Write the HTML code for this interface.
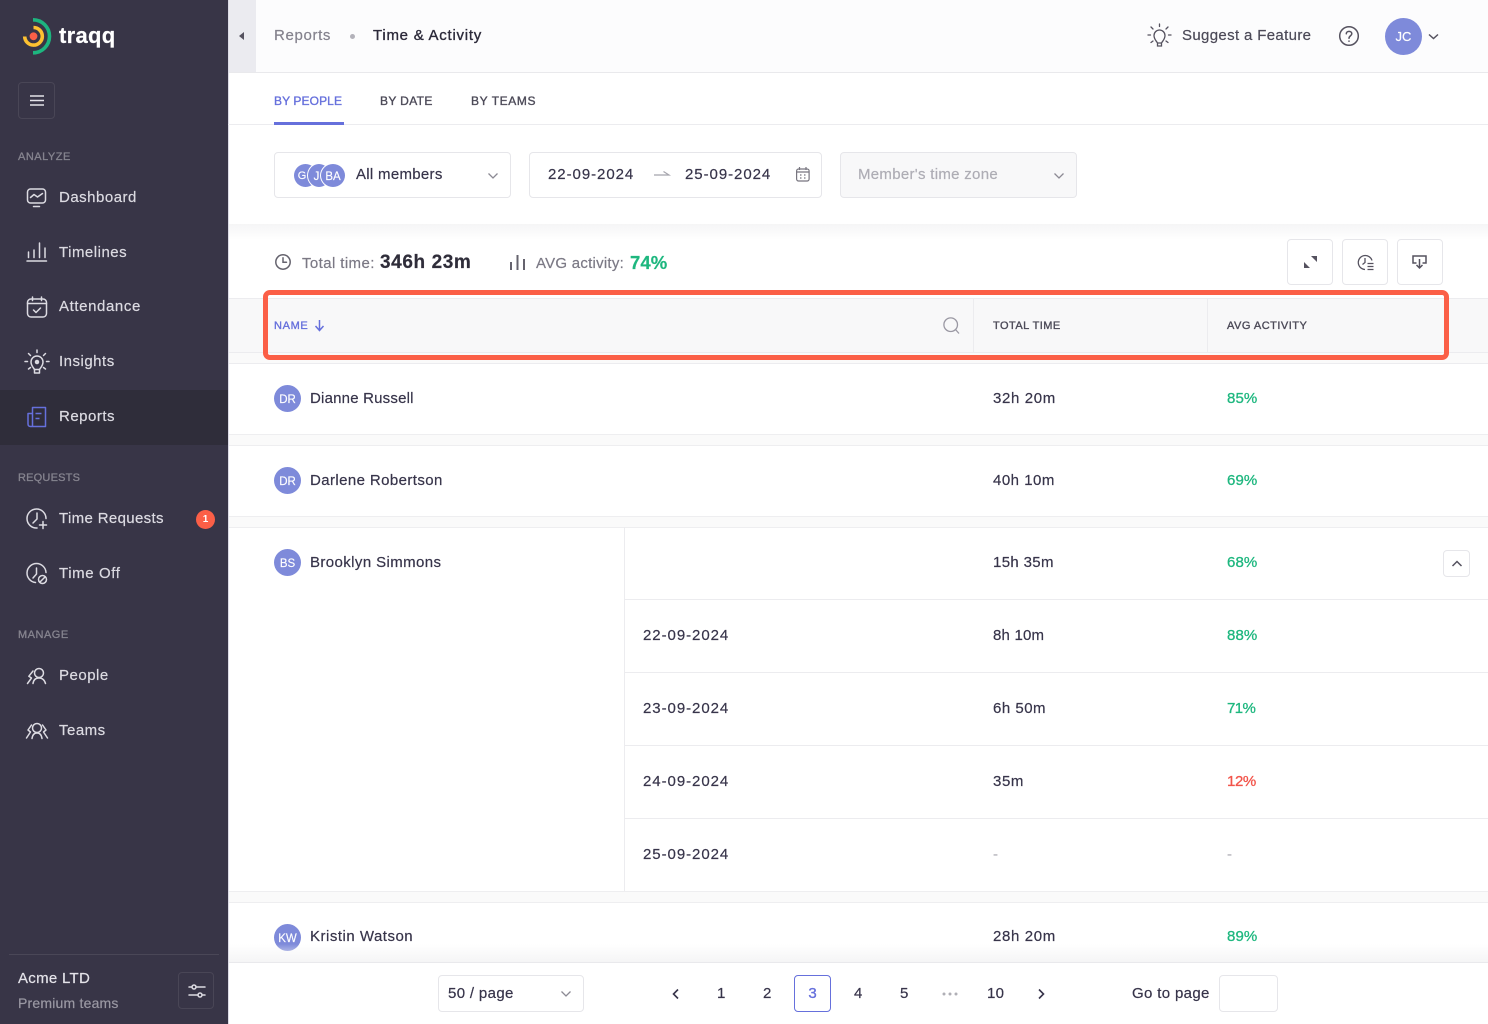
<!DOCTYPE html>
<html><head><meta charset="utf-8"><style>
*{box-sizing:border-box}
html,body{margin:0;padding:0}
body{width:1488px;height:1024px;position:relative;overflow:hidden;background:#fff;font-family:"Liberation Sans",sans-serif;color:#37344a;font-size:15px}
.a,.t{position:absolute}
.t{white-space:nowrap;line-height:20px;letter-spacing:.25px;margin-top:1px;-webkit-text-stroke:.2px currentColor}
.nav{color:#dcdbe2;font-size:15px;letter-spacing:.5px}
.sec{color:#86848f;font-size:11px;letter-spacing:.5px;-webkit-text-stroke:.3px currentColor}
.h{-webkit-text-stroke:.35px currentColor}
svg{position:absolute;overflow:visible;fill:none}
.sb{stroke:#dcdbe2;stroke-width:1.5;stroke-linecap:round;stroke-linejoin:round}
.g{color:#1eb77f;-webkit-text-stroke:.3px #1eb77f}
.av{position:absolute;width:27px;height:27px;border-radius:50%;background:#7e8ada;color:#fff;font-size:11.500px;text-align:center;line-height:30px;-webkit-text-stroke:.15px #fff}
.ln{position:absolute;left:228px;width:1260px;height:1px;background:#ececef}
.gap{position:absolute;left:229px;width:1259px;height:12px;background:#fafafa;border-top:1px solid #eeeef0;border-bottom:1px solid #eeeef0}
.box{position:absolute;border:1px solid #e6e6ea;border-radius:4px;background:#fff}
</style></head><body>

<!-- Sidebar -->
<div class="a" style="left:0;top:0;width:228px;height:1024px;background:#383547"></div>
<div class="a" style="left:228px;top:0;width:1px;height:1024px;background:#dcdbe6"></div>
<div class="a" style="left:0;top:390px;width:228px;height:55px;background:#2f2d3a"></div>
<svg style="left:20px;top:16px" width="36" height="40" viewBox="0 0 36 40">
<path d="M13 3.800A16.500 16.500 0 1 1 13 36.800" stroke="#1db57f" stroke-width="3.600"/>
<path d="M13.500 11.500A8.800 8.800 0 1 1 4.700 20.500" stroke="#fdc131" stroke-width="3.600"/>
<circle cx="13.500" cy="20.300" r="3.900" fill="#fb5f47"/></svg>
<div class="t" style="left:59px;top:22px;color:#fff;font-size:22px;font-weight:700;line-height:26px;letter-spacing:.3px">traqq</div>
<div class="box" style="left:18px;top:82px;width:37px;height:37px;background:transparent;border-color:#494656;border-radius:4px"></div>
<svg style="left:30px;top:95px" width="14" height="11"><path d="M0 1H14M0 5.500H14M0 10H14" stroke="#e4e3e9" stroke-width="1.500"/></svg>

<div class="t sec" style="left:18px;top:146px">ANALYZE</div>
<svg class="sb" style="left:26px;top:188px" width="22" height="20" viewBox="0 0 22 20"><rect x="1.500" y="1" width="18" height="14" rx="3"/><path d="M4.500 9.500L8 6.500L11.500 9L16.500 5.500M7.500 18.500H13.500"/></svg>
<div class="t nav" style="left:59px;top:187px">Dashboard</div>
<svg class="sb" style="left:26px;top:242px" width="22" height="20" viewBox="0 0 22 20"><path d="M1 19H20.500M2.500 15.500V10M8 15.500V8M13.500 15.500V1M19 15.500V6"/></svg>
<div class="t nav" style="left:59px;top:242px">Timelines</div>
<svg class="sb" style="left:26px;top:296px" width="22" height="22" viewBox="0 0 22 22"><rect x="1.500" y="3" width="19" height="18" rx="3.500"/><path d="M6.500 1V4.500M15.500 1V4.500M1.500 7.500H20.500M7.500 14L10 16.500L14.500 12"/></svg>
<div class="t nav" style="left:59px;top:296px;letter-spacing:.6px">Attendance</div>
<svg class="sb" style="left:25px;top:350px" width="24" height="25" viewBox="0 0 24 25"><path d="M12 0V2.500M3.500 3.500L5.500 5.500M20.500 3.500L18.500 5.500M0 11.500H2.500M21.500 11.500H24M3.500 19L5.500 17.500M20.500 19L18.500 17.500M9.500 19.500H14.500V23H9.500Z"/><path d="M9.500 19.500C8 17 6 15.500 6 12A6 6 0 0 1 18 12C18 15.500 16 17 14.500 19.500"/><circle cx="12" cy="12" r="1.500" fill="#dcdbe2"/></svg>
<div class="t nav" style="left:59px;top:351px">Insights</div>
<svg style="left:27px;top:406px;stroke:#6670dc;stroke-width:1.500;stroke-linejoin:round" width="20" height="22" viewBox="0 0 20 22"><path d="M5.500 20.500V1.500H18.500V20.500H3.500C2 20.500 1 19.500 1 18V7.500H5.500M8.500 7.500H14.500M8.500 12.500H12.500"/></svg>
<div class="t nav" style="left:59px;top:406px">Reports</div>

<div class="t sec" style="left:18px;top:467px;letter-spacing:.2px">REQUESTS</div>
<svg class="sb" style="left:26px;top:508px" width="22" height="22" viewBox="0 0 22 22"><path d="M20 10.500A9.500 9.500 0 1 0 11 20M11 5V11L7 15M17 13.500V20.500M13.500 17H20.500"/></svg>
<div class="t nav" style="left:59px;top:508px;letter-spacing:.35px">Time Requests</div>
<div class="a" style="left:196px;top:510px;width:19px;height:19px;border-radius:50%;background:#fb5f47;color:#fff;font-size:10px;font-weight:700;text-align:center;line-height:19px">1</div>
<svg class="sb" style="left:26px;top:563px" width="22" height="22" viewBox="0 0 22 22"><path d="M20 9.500A9.500 9.500 0 1 0 9.500 19.500M10.500 5V11L7 15"/><circle cx="16.500" cy="16.500" r="4"/><path d="M14 19L19 14"/></svg>
<div class="t nav" style="left:59px;top:563px;letter-spacing:.6px">Time Off</div>

<div class="t sec" style="left:18px;top:624px">MANAGE</div>
<svg class="sb" style="left:26px;top:667px" width="22" height="18" viewBox="0 0 22 18"><circle cx="13" cy="6" r="4.500"/><path d="M7 16.500C7.500 13 9.500 11 13 11S18.500 13 19.500 16.500M7 4L2.800 9.300L5.500 11L1.500 16.500"/></svg>
<div class="t nav" style="left:59px;top:665px">People</div>
<svg class="sb" style="left:25px;top:722px" width="24" height="18" viewBox="0 0 24 18"><circle cx="12" cy="6" r="4.500"/><path d="M7 16.500C7.500 13 9 11 12 11S16.500 13 17 16.500M6.500 3L3 8L5.500 10L1.500 16M17.500 3L21 8L18.500 10L22.500 16"/></svg>
<div class="t nav" style="left:59px;top:720px">Teams</div>

<div class="a" style="left:9px;top:954px;width:210px;height:1px;background:#4a4757"></div>
<div class="t" style="left:18px;top:968px;color:#e4e3e9;letter-spacing:.3px">Acme LTD</div>
<div class="t" style="left:18px;top:992px;color:#9a98a3;font-size:14px;letter-spacing:.2px">Premium teams</div>
<div class="box" style="left:178px;top:972px;width:36px;height:37px;background:transparent;border-color:#494656;border-radius:4px"></div>
<svg style="left:188px;top:983px" width="18" height="16" viewBox="0 0 18 16" class="sb"><circle cx="6" cy="4" r="2"/><circle cx="12" cy="12" r="2"/><path d="M1 4H4M8 4H17M1 12H10M14 12H17"/></svg>

<!-- Header -->
<div class="a" style="left:229px;top:0;width:1259px;height:73px;background:#fcfcfd;border-bottom:1px solid #e9e9ec"></div>
<div class="a" style="left:229px;top:0;width:27px;height:72px;background:#ebebf0"></div>
<svg style="left:239px;top:32px" width="6" height="8"><path d="M5 0V8L0 4Z" fill="#55525f"/></svg>
<div class="t" style="left:274px;top:25px;color:#84828d;letter-spacing:.65px">Reports</div>
<div class="a" style="left:350px;top:34px;width:5px;height:5px;border-radius:50%;background:#b3b2ba"></div>
<div class="t h" style="left:373px;top:25px;color:#2c2a3a;letter-spacing:.75px">Time &amp; Activity</div>
<svg style="left:1148px;top:24px;stroke:#55525f;stroke-width:1.300;stroke-linecap:round" width="23" height="23" viewBox="0 0 23 23"><path d="M11.500 0V2.500M3 3L5 5M20 3L18 5M0 11H2.500M20.500 11H23M3 18.500L5 17M20 18.500L18 17M9.500 19H13.500V22H9.500ZM9.500 19C8 16.500 6 15 6 11.500A5.500 5.500 0 0 1 17 11.500C17 15 15 16.500 13.500 19"/></svg>
<div class="t" style="left:1182px;top:25px;color:#4c4a58;letter-spacing:.35px">Suggest a Feature</div>
<svg style="left:1339px;top:26px;stroke:#55525f;stroke-width:1.500;stroke-linecap:round" width="20" height="20" viewBox="0 0 20 20"><circle cx="10" cy="10" r="9.300"/><path d="M7.300 7.800C7.300 4.500 12.800 4.500 12.800 7.800C12.800 9.800 10 9.800 10 12.300M10 15V15.300"/></svg>
<div class="a" style="left:1385px;top:18px;width:37px;height:37px;border-radius:50%;background:#7e8ada;color:#fff;font-size:13px;text-align:center;line-height:38px;-webkit-text-stroke:.2px #fff">JC</div>
<svg style="left:1429px;top:34px;stroke:#55525f;stroke-width:1.500" width="9" height="6"><path d="M0 .5L4.500 4.500L9 .5"/></svg>

<!-- Tabs -->
<div class="ln" style="top:124px"></div>
<div class="t h" style="left:274px;top:90px;font-size:12px;color:#6670dc;letter-spacing:.1px">BY PEOPLE</div>
<div class="t h" style="left:380px;top:90px;font-size:12px;color:#4c4a58;letter-spacing:.35px">BY DATE</div>
<div class="t h" style="left:471px;top:90px;font-size:12px;color:#4c4a58;letter-spacing:.6px">BY TEAMS</div>
<div class="a" style="left:274px;top:122px;width:70px;height:3px;background:#6670dc"></div>

<!-- Filters -->
<div class="box" style="left:274px;top:152px;width:237px;height:46px"></div>
<div class="av" style="left:294px;top:164px;width:23px;height:23px;line-height:24px;font-size:11px;text-indent:-7px">G</div>
<div class="av" style="left:307px;top:163px;width:24px;height:25px;line-height:26px;border:1px solid #fff;text-indent:-5px">J</div>
<div class="av" style="left:320px;top:163px;width:26px;height:25px;line-height:26px;border:1px solid #fff">BA</div>
<div class="t" style="left:356px;top:164px;letter-spacing:.3px">All members</div>
<svg style="left:488px;top:173px;stroke:#8c8a94;stroke-width:1.300" width="10" height="6"><path d="M.5 .5L5 5L9.500 .5"/></svg>
<div class="box" style="left:529px;top:152px;width:293px;height:46px"></div>
<div class="t" style="left:548px;top:164px;letter-spacing:.95px">22-09-2024</div>
<svg style="left:654px;top:171px;stroke:#a5a4ac;stroke-width:1.200" width="16" height="7"><path d="M0 4H15L9.500 .5"/></svg>
<div class="t" style="left:685px;top:164px;letter-spacing:.95px">25-09-2024</div>
<svg style="left:796px;top:167px;stroke:#77757f;stroke-width:1.200" width="14" height="15" viewBox="0 0 14 15"><rect x=".6" y="2" width="12.500" height="12" rx="2"/><path d="M3.500 0V3M10 0V3M.6 5H13M4 8H5.500M8 8H9.500M4 11H5.500M8 11H9.500"/></svg>
<div class="box" style="left:840px;top:152px;width:237px;height:46px;background:#f8f8f9"></div>
<div class="t" style="left:858px;top:164px;color:#aeadb5;letter-spacing:.3px">Member's time zone</div>
<svg style="left:1054px;top:173px;stroke:#8c8a94;stroke-width:1.300" width="10" height="6"><path d="M.5 .5L5 5L9.500 .5"/></svg>

<div class="a" style="left:229px;top:224px;width:1259px;height:16px;background:linear-gradient(#f5f5f6,#fff)"></div>

<!-- Stats -->
<svg style="left:275px;top:254px;stroke:#65636e;stroke-width:1.500;stroke-linecap:round" width="16" height="16" viewBox="0 0 16 16"><circle cx="8" cy="8" r="7.200"/><path d="M8 3.800V8.300H11.500"/></svg>
<div class="t" style="left:302px;top:253px;color:#7b7985;letter-spacing:.4px">Total time:</div>
<div class="t" style="left:380px;top:252px;color:#2f2d3a;font-size:19px;font-weight:700;letter-spacing:.6px">346h 23m</div>
<svg style="left:510px;top:254px;stroke:#65636e;stroke-width:2" width="15" height="16"><path d="M1 16V8M7.500 16V1M14 16V5"/></svg>
<div class="t" style="left:536px;top:253px;color:#7b7985;letter-spacing:.25px">AVG activity:</div>
<div class="t" style="left:630px;top:252px;color:#1eb77f;font-size:18.500px;font-weight:700;letter-spacing:.1px">74%</div>
<div class="box" style="left:1287px;top:239px;width:46px;height:46px"></div>
<svg style="left:1304px;top:256px;fill:#55525f" width="13" height="12"><path d="M7 0H13V6ZM0 6L6 12H0Z"/></svg>
<div class="box" style="left:1342px;top:239px;width:46px;height:46px"></div>
<svg style="left:1357px;top:254px;stroke:#55525f;stroke-width:1.300" width="17" height="17" viewBox="0 0 17 17"><path d="M15 6.500A7 7 0 1 0 8 15.500M8 4V8.500L5.500 10.500M10.500 9.500H16.500M10.500 12.500H16.500M10.500 15.500H16.500"/></svg>
<div class="box" style="left:1397px;top:239px;width:46px;height:46px"></div>
<svg style="left:1412px;top:255px;stroke:#55525f;stroke-width:1.500" width="15" height="14" viewBox="0 0 15 14"><path d="M4.500 8H1V1H14V8H10.500M7.500 4V13M4.500 10L7.500 13L10.500 10"/></svg>

<!-- Table head -->
<div class="a" style="left:229px;top:298px;width:1259px;height:55px;background:#f8f8f9;border-top:1px solid #ececef;border-bottom:1px solid #ececef"></div>
<div class="a" style="left:973px;top:298px;width:1px;height:55px;background:#ececef"></div>
<div class="a" style="left:1207px;top:298px;width:1px;height:55px;background:#ececef"></div>
<div class="t h" style="left:274px;top:315px;font-size:11px;color:#6670dc;letter-spacing:.65px">NAME</div>
<svg style="left:315px;top:320px;stroke:#6670dc;stroke-width:1.500" width="9" height="11"><path d="M4.500 0V10M.5 6L4.500 10.500L8.500 6"/></svg>
<svg style="left:943px;top:317px;stroke:#9a98a3;stroke-width:1.300" width="17" height="17"><circle cx="7.700" cy="7.700" r="6.800"/><path d="M12.500 12.500L16 16.500"/></svg>
<div class="t h" style="left:993px;top:315px;font-size:11px;color:#4c4a58;letter-spacing:.45px">TOTAL TIME</div>
<div class="t h" style="left:1227px;top:315px;font-size:11px;color:#4c4a58;letter-spacing:.5px">AVG ACTIVITY</div>

<!-- Rows -->
<div class="a" style="left:229px;top:353px;width:1259px;height:11px;background:#fafafa;border-bottom:1px solid #ececef"></div>
<div class="av" style="left:274px;top:385px">DR</div>
<div class="t" style="left:310px;top:388px;letter-spacing:.2px">Dianne Russell</div>
<div class="t" style="left:993px;top:388px;letter-spacing:.65px">32h 20m</div>
<div class="t g" style="left:1227px;top:388px;letter-spacing:.1px">85%</div>
<div class="gap" style="top:434px"></div>
<div class="av" style="left:274px;top:467px">DR</div>
<div class="t" style="left:310px;top:470px;letter-spacing:.4px">Darlene Robertson</div>
<div class="t" style="left:993px;top:470px;letter-spacing:.5px">40h 10m</div>
<div class="t g" style="left:1227px;top:470px;letter-spacing:.1px">69%</div>
<div class="gap" style="top:516px"></div>
<div class="av" style="left:274px;top:549px">BS</div>
<div class="t" style="left:310px;top:552px;letter-spacing:.4px">Brooklyn Simmons</div>
<div class="a" style="left:624px;top:527px;width:1px;height:364px;background:#ececef"></div>
<div class="t" style="left:993px;top:552px;letter-spacing:.35px">15h 35m</div>
<div class="t g" style="left:1227px;top:552px;letter-spacing:.1px">68%</div>
<div class="box" style="left:1443px;top:550px;width:27px;height:27px"></div>
<svg style="left:1452px;top:560px;stroke:#55525f;stroke-width:1.500" width="10" height="7"><path d="M.5 6L5 1.500L9.500 6"/></svg>
<div class="a" style="left:625px;top:599px;width:863px;height:1px;background:#ececef"></div>
<div class="t" style="left:643px;top:625px;letter-spacing:.95px">22-09-2024</div>
<div class="t" style="left:993px;top:625px;letter-spacing:.2px">8h 10m</div>
<div class="t g" style="left:1227px;top:625px;letter-spacing:.1px">88%</div>
<div class="a" style="left:625px;top:672px;width:863px;height:1px;background:#ececef"></div>
<div class="t" style="left:643px;top:698px;letter-spacing:.95px">23-09-2024</div>
<div class="t" style="left:993px;top:698px;letter-spacing:.5px">6h 50m</div>
<div class="t g" style="left:1227px;top:698px;letter-spacing:-.6px">71%</div>
<div class="a" style="left:625px;top:745px;width:863px;height:1px;background:#ececef"></div>
<div class="t" style="left:643px;top:771px;letter-spacing:.95px">24-09-2024</div>
<div class="t" style="left:993px;top:771px;letter-spacing:.6px">35m</div>
<div class="t" style="left:1227px;top:771px;color:#f2544a;letter-spacing:-.4px;-webkit-text-stroke:.3px #f2544a">12%</div>
<div class="a" style="left:625px;top:818px;width:863px;height:1px;background:#ececef"></div>
<div class="t" style="left:643px;top:844px;letter-spacing:.95px">25-09-2024</div>
<div class="t" style="left:993px;top:844px;color:#b5b4bb">-</div>
<div class="t" style="left:1227px;top:844px;color:#b5b4bb">-</div>
<div class="gap" style="top:891px"></div>
<div class="av" style="left:274px;top:924px">KW</div>
<div class="t" style="left:310px;top:926px;letter-spacing:.5px">Kristin Watson</div>
<div class="t" style="left:993px;top:926px;letter-spacing:.65px">28h 20m</div>
<div class="t g" style="left:1227px;top:926px;letter-spacing:.1px">89%</div>

<!-- Highlight -->
<div class="a" style="left:263px;top:290px;width:1186px;height:70px;border:5px solid #fb5f47;border-radius:7px"></div>

<!-- Footer -->
<div class="a" style="left:229px;top:944px;width:1259px;height:18px;background:linear-gradient(rgba(245,245,246,0),#f5f5f6)"></div>
<div class="a" style="left:229px;top:962px;width:1259px;height:62px;background:#fff;border-top:1px solid #e9e9ec"></div>
<div class="box" style="left:438px;top:975px;width:146px;height:37px"></div>
<div class="t" style="left:448px;top:983px;letter-spacing:.35px">50 / page</div>
<svg style="left:561px;top:991px;stroke:#8c8a94;stroke-width:1.300" width="10" height="6"><path d="M.5 .5L5 5L9.500 .5"/></svg>
<svg style="left:672px;top:989px;stroke:#37344a;stroke-width:1.600" width="7" height="10"><path d="M6 .5L1.500 5L6 9.500"/></svg>
<div class="t" style="left:717px;top:983px">1</div>
<div class="t" style="left:763px;top:983px">2</div>
<div class="a" style="left:794px;top:975px;width:37px;height:37px;border:1px solid #6670dc;border-radius:4px;color:#6670dc;text-align:center;line-height:36px;-webkit-text-stroke:.35px #6670dc">3</div>
<div class="t" style="left:854px;top:983px">4</div>
<div class="t" style="left:900px;top:983px">5</div>
<svg style="left:942px;top:992px;fill:#b0afb6" width="16" height="4"><circle cx="2" cy="2" r="1.500"/><circle cx="8" cy="2" r="1.500"/><circle cx="14" cy="2" r="1.500"/></svg>
<div class="t" style="left:987px;top:983px">10</div>
<svg style="left:1038px;top:989px;stroke:#37344a;stroke-width:1.600" width="7" height="10"><path d="M1 .5L5.500 5L1 9.500"/></svg>
<div class="t" style="left:1132px;top:983px;letter-spacing:.35px">Go to page</div>
<div class="box" style="left:1219px;top:975px;width:59px;height:37px"></div>
</body></html>
